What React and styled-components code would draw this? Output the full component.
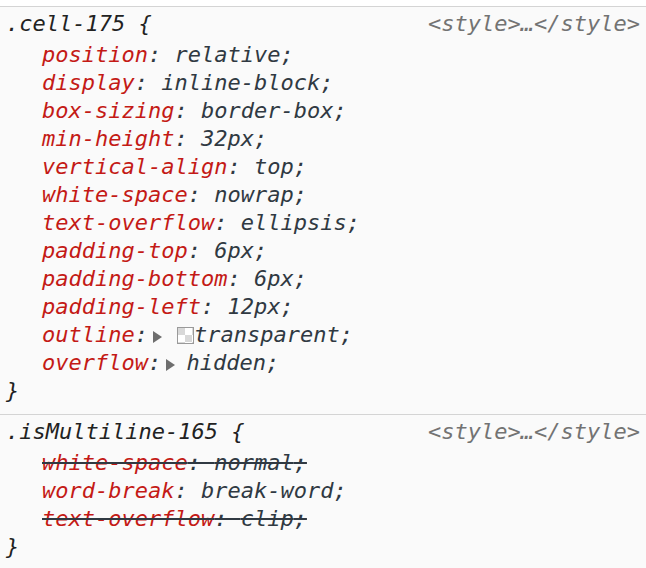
import React from 'react';
import styled, { createGlobalStyle } from 'styled-components';

const Global = createGlobalStyle`
  html, body { margin: 0; padding: 0; background: #fff; }
  body { font-family: "DejaVu Sans Mono", "Liberation Mono", monospace; }
`;

const Pane = styled.div`
  width: 646px;
  height: 568px;
  padding-top: 6px;
  box-sizing: border-box;
  background: #fff;
  overflow: hidden;
`;

const Rule = styled.section`
  background: #fafafa;
  border-top: 1.5px solid #d4d4d4;
  padding: ${p => p.$pad || '3px 6px 9px 6px'};
  font-family: "DejaVu Sans Mono", "Liberation Mono", monospace;
  font-style: italic;
  font-size: 22px;
  line-height: 28px;
  color: #222;
`;

const Header = styled.div`
  display: flex;
  justify-content: space-between;
  align-items: baseline;
  margin-bottom: 3px;
`;

const Selector = styled.span`
  color: #222;
`;

const Source = styled.span`
  color: #737373;
`;

const Decl = styled.div`
  padding-left: 36px;
  white-space: pre;
  color: #303942;
  text-decoration: ${p => (p.$off ? 'line-through' : 'none')};
  text-decoration-thickness: 2px;
`;

const Name = styled.span`
  color: #c41a16;
`;

const Expand = styled.span`
  display: inline-block;
  width: 0;
  height: 0;
  border-top: 6px solid transparent;
  border-bottom: 6px solid transparent;
  border-left: 9px solid #6e6e6e;
  margin: 0 -2px 0 5px;
  vertical-align: -1px;
`;

const Swatch = styled.span`
  display: inline-block;
  width: 17px;
  height: 17px;
  box-sizing: border-box;
  border: 1.5px solid #9a9a9a;
  margin: 0 0 0 17px;
  vertical-align: -2px;
  background: conic-gradient(#d8d8d8 0 25%, #fff 0 50%, #d8d8d8 0 75%, #fff 0);
  background-size: 14px 14px;
  background-position: 7px 0;
`;

const Close = styled.div`
  color: #222;
`;

const cellDecls = [
  ['position', 'relative'],
  ['display', 'inline-block'],
  ['box-sizing', 'border-box'],
  ['min-height', '32px'],
  ['vertical-align', 'top'],
  ['white-space', 'nowrap'],
  ['text-overflow', 'ellipsis'],
  ['padding-top', '6px'],
  ['padding-bottom', '6px'],
  ['padding-left', '12px'],
];

const multiDecls = [
  ['white-space', 'normal', true],
  ['word-break', 'break-word'],
  ['text-overflow', 'clip', true],
];

const App = () => (
  <Pane>
    <Global />
    <Rule>
      <Header>
        <Selector>.cell-175 {'{'}</Selector>
        <Source>&lt;style&gt;…&lt;/style&gt;</Source>
      </Header>
      {cellDecls.map(([n, v]) => (
        <Decl key={n}><Name>{n}</Name>: {v};</Decl>
      ))}
      <Decl><Name>outline</Name>:<Expand /><Swatch />transparent;</Decl>
      <Decl><Name>overflow</Name>:<Expand /> hidden;</Decl>
      <Close>{'}'}</Close>
    </Rule>
    <Rule $pad="3px 6px 12px 6px">
      <Header>
        <Selector>.isMultiline-165 {'{'}</Selector>
        <Source>&lt;style&gt;…&lt;/style&gt;</Source>
      </Header>
      {multiDecls.map(([n, v, off]) => (
        <Decl key={n} $off={off}><Name>{n}</Name>: {v};</Decl>
      ))}
      <Close>{'}'}</Close>
    </Rule>
  </Pane>
);

export default App;
